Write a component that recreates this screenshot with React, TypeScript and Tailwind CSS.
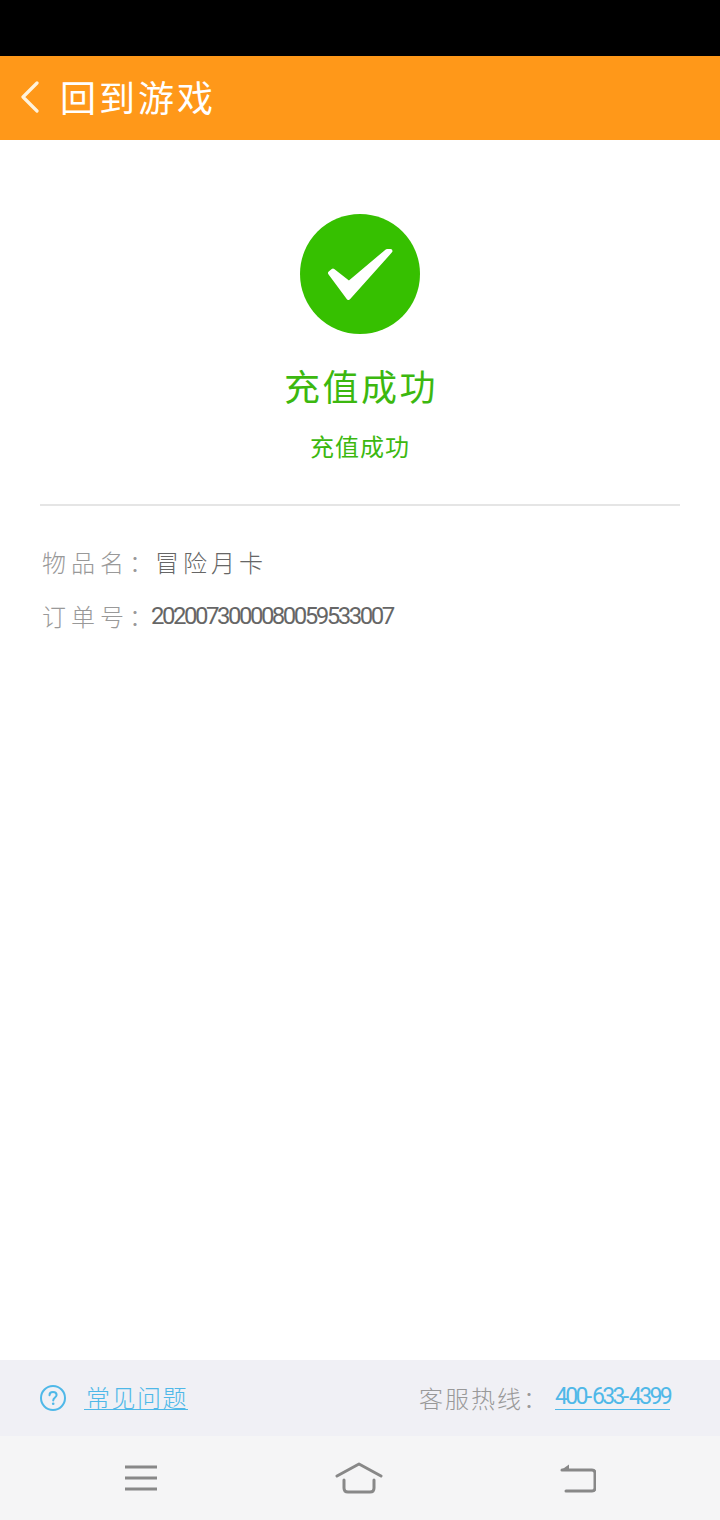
import React from 'react';

const CJK = "font-['Noto_Sans_CJK_SC',sans-serif]";
const NUM = "font-['Roboto','Noto_Sans_CJK_SC',sans-serif]";

const CheckBadge: React.FC = () => (
    <div className="w-[120px] h-[120px] rounded-full bg-[#36c000] flex items-center justify-center">
        <svg width="120" height="120" viewBox="0 0 120 120" fill="none">
            <path d="M30 59 L33 56.5 L49 69 L87 37 L90.5 37 L48.5 84 Z" fill="#ffffff" stroke="#ffffff" strokeWidth="4" strokeLinejoin="round" />
        </svg>
    </div>
);

const InfoRow: React.FC<{ label: string; className?: string; children: React.ReactNode }> = ({ label, className, children }) => (
    <div className={`flex items-center h-[54px] ${className ?? ''}`}>
        <span className={`${CJK} w-[111px] pl-[2px] text-[24px] font-light tracking-[5px] text-[#999999] whitespace-nowrap`}>{label}</span>
        {children}
    </div>
);

const FooterBar: React.FC = () => (
    <div className="h-[76px] bg-[#f0f0f5] flex items-center pl-[40px] pr-[50px]">
        <svg width="26" height="26" viewBox="0 0 26 26" fill="none">
            <circle cx="13" cy="13" r="12" stroke="#4fb8e8" strokeWidth="2" />
            <path d="M9.5 10.2 C9.5 8 11 7 13 7 C15 7 16.6 8.2 16.6 10 C16.6 12.4 13.2 12.6 13.2 15.4" stroke="#4fb8e8" strokeWidth="2" strokeLinecap="round" />
            <circle cx="13.2" cy="18.8" r="1.3" fill="#4fb8e8" />
        </svg>
        <a className={`${CJK} ml-[18px] pl-[2px] h-[24px] leading-[22px] border-b border-[#4fb8e8] text-[24px] font-light tracking-[1.5px] text-[#4fb8e8] whitespace-nowrap`}>常见问题</a>
        <span className={`${CJK} ml-auto text-[24px] font-light tracking-[2px] text-[#999999] whitespace-nowrap`}>客服热线：</span>
        <a className={`${NUM} ml-[6px] h-[24px] leading-[22px] border-b border-[#4fb8e8] text-[23px] tracking-[-2.7px] text-[#4fb8e8] whitespace-nowrap`}>
            400<span className="tracking-[0px]">-</span>633<span className="tracking-[0px]">-</span>4399
        </a>
    </div>
);

const NavBar: React.FC = () => (
    <div className="h-[84px] bg-[#f5f5f6] flex items-center justify-between pl-[124px] pr-[124px]">
        <svg width="34" height="26" viewBox="0 0 34 26" fill="none" stroke="#888888" strokeWidth="3">
            <path d="M1 2 H33 M1 13 H33 M1 24 H33" />
        </svg>
        <svg width="48" height="32" viewBox="0 0 48 32" fill="none" stroke="#888888" strokeWidth="3" strokeLinecap="round" strokeLinejoin="round">
            <path d="M2 14 L24 2 L46 14" />
            <path d="M9 18 V26 Q9 30 13 30 H35 Q39 30 39 26 V18" />
        </svg>
        <svg width="36" height="30" viewBox="0 0 36 30" fill="none">
            <path d="M2 7 H32 Q35 7 35 10 V25 Q35 28 32 28 H6" stroke="#888888" strokeWidth="3" strokeLinecap="round" />
            <path d="M0.5 7.5 L9 1.5 V8 Z" fill="#888888" />
        </svg>
    </div>
);

const App: React.FC = () => {
    return (
        <div className="w-[720px] h-[1520px] flex flex-col bg-white">
            <div className="h-[56px] bg-black" />
            <header className="h-[84px] bg-[#ff9819] flex items-center pl-[20px] pb-[2px]">
                <svg width="20" height="32" viewBox="0 0 20 32" fill="none">
                    <path d="M17 2 L3 16 L17 30" stroke="#fff3dd" strokeWidth="3.2" strokeLinecap="round" strokeLinejoin="round" />
                </svg>
                <span className={`${CJK} ml-[20px] mb-[2px] text-[36px] font-normal tracking-[3px] text-white`}>回到游戏</span>
            </header>

            <main className="flex-1 px-[40px] pt-[74px]">
                <div className="flex flex-col items-center">
                    <CheckBadge />
                    <div className={`${CJK} mt-[25px] h-[52px] leading-[52px] pl-[2px] text-[36px] tracking-[2.5px] text-[#3cb80f]`}>充值成功</div>
                    <div className={`${CJK} mt-[19px] h-[32px] leading-[32px] text-[24px] tracking-[1px] text-[#3cb80f]`}>充值成功</div>
                </div>
                <div className="mt-[42px] border-t-2 border-[#e5e5e5]" />
                <div className="mt-[29px]">
                    <InfoRow label="物品名：">
                        <span className={`${CJK} ml-[4px] text-[24px] font-light tracking-[4px] text-[#666666] whitespace-nowrap`}>冒险月卡</span>
                    </InfoRow>
                    <InfoRow label="订单号：">
                        <span className={`${NUM} text-[24px] tracking-[-2.5px] text-[#666666] whitespace-nowrap`}>2020073000080059533007</span>
                    </InfoRow>
                </div>
            </main>

            <FooterBar />
            <NavBar />
        </div>
    );
};

export default App;
